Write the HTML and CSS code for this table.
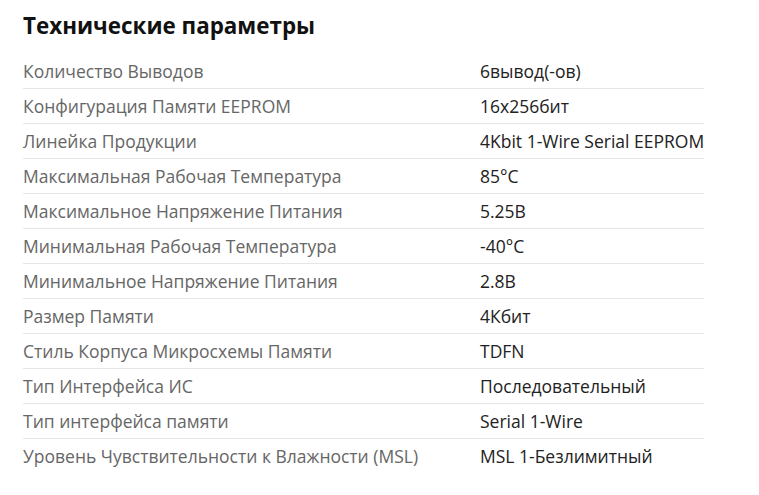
FILE: index.html
```html
<!DOCTYPE html>
<html lang="ru">
<head>
<meta charset="utf-8">
<link rel="stylesheet" href="styles.css">
</head>
<body>
<section class="specs">
  <h2 class="specs-title">Технические параметры</h2>
  <div class="specs-table">
    <div class="row"><div class="label">Количество Выводов</div><div class="value">6вывод(-ов)</div></div>
    <div class="row"><div class="label">Конфигурация Памяти EEPROM</div><div class="value">16x256бит</div></div>
    <div class="row"><div class="label">Линейка Продукции</div><div class="value">4Kbit 1-Wire Serial EEPROM</div></div>
    <div class="row"><div class="label">Максимальная Рабочая Температура</div><div class="value">85°C</div></div>
    <div class="row"><div class="label">Максимальное Напряжение Питания</div><div class="value">5.25В</div></div>
    <div class="row"><div class="label">Минимальная Рабочая Температура</div><div class="value">-40°C</div></div>
    <div class="row"><div class="label">Минимальное Напряжение Питания</div><div class="value">2.8В</div></div>
    <div class="row"><div class="label">Размер Памяти</div><div class="value">4Кбит</div></div>
    <div class="row"><div class="label">Стиль Корпуса Микросхемы Памяти</div><div class="value">TDFN</div></div>
    <div class="row"><div class="label">Тип Интерфейса ИС</div><div class="value">Последовательный</div></div>
    <div class="row"><div class="label">Тип интерфейса памяти</div><div class="value">Serial 1-Wire</div></div>
    <div class="row"><div class="label">Уровень Чувствительности к Влажности (MSL)</div><div class="value">MSL 1-Безлимитный</div></div>
  </div>
</section>
</body>
</html>
```

FILE: styles.css
```css
html, body {
  margin: 0;
  padding: 0;
  background: #fff;
}
body {
  font-family: "Open Sans", "Noto Sans", sans-serif;
}
.specs {
  padding: 10px 0 0 23px;
  width: 681px;
}
.specs-title {
  margin: 0 0 11px 0;
  font-size: 22.4px;
  font-weight: 700;
  line-height: 32px;
  color: #111;
}
.specs-table {
  display: flex;
  flex-direction: column;
}
.row {
  display: grid;
  grid-template-columns: 457px 1fr;
  height: 35px;
  align-items: center;
  font-size: 17.5px;
  border-top: 1px solid #e6e6e6;
  box-sizing: border-box;
}
.row:first-child {
  border-top: none;
}
.label {
  color: #666;
}
.value {
  color: #222;
  white-space: nowrap;
}
```
